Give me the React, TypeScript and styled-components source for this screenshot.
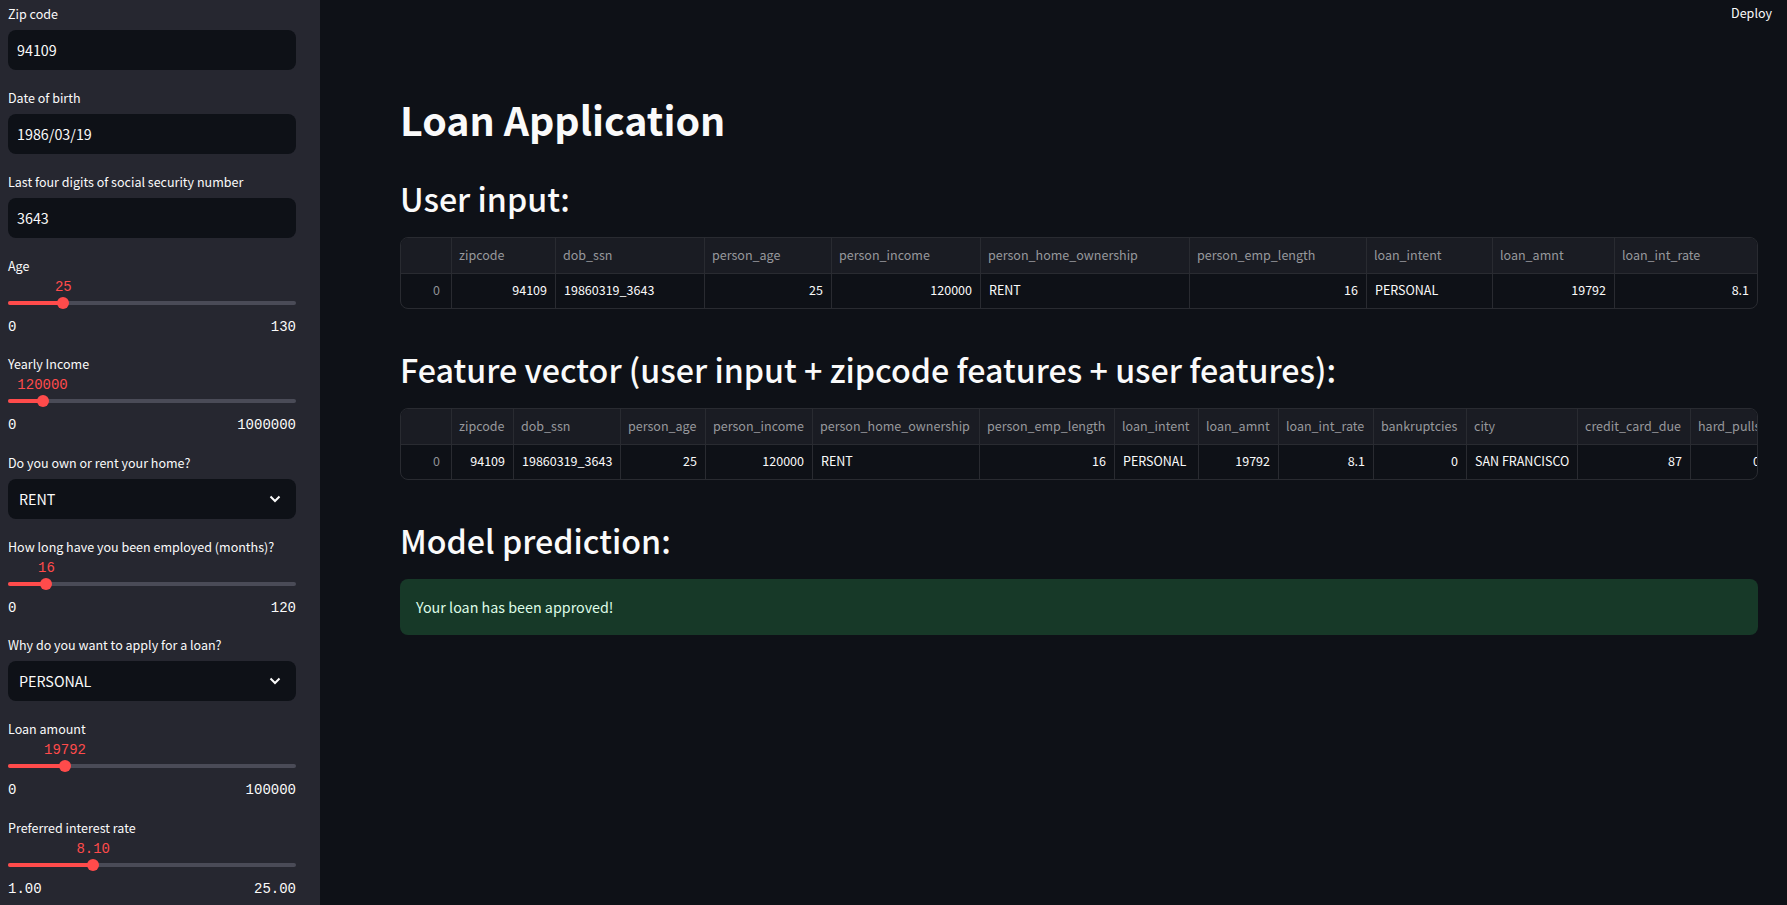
import React, { useId, useState } from "react";
import styled, { createGlobalStyle } from "styled-components";

const colors = {
  page: "#0e1117",
  sidebar: "#262730",
  text: "#fafafa",
  accent: "#ff4b4b",
  rail: "#4a4b57",
  line: "#292b31",
  tableHead: "#1a1c23",
  muted: "#97989c",
  faint: "#909296",
  successBg: "#173928",
  successText: "#dffde9",
};

const GlobalStyle = createGlobalStyle`
  *, *::before, *::after { box-sizing: border-box; }
  body {
    margin: 0;
    background: ${colors.page};
    color: ${colors.text};
    font-family: "Source Sans Pro", "Noto Sans CJK SC", "Noto Sans", sans-serif;
    font-size: 16px;
    font-size-adjust: 0.486;
    line-height: 1.6;
  }
  button, input, select { font: inherit; font-size-adjust: inherit; color: inherit; }
`;

const Shell = styled.div`
  display: flex;
  min-height: 100vh;
`;

const Sidebar = styled.aside`
  flex: 0 0 320px;
  display: flex;
  flex-direction: column;
  gap: 16px;
  padding: 2px 24px 0 8px;
  background: ${colors.sidebar};
`;

const Field = styled.div`
  display: flex;
  flex-direction: column;
`;

const Label = styled.label`
  height: 24px;
  font-size: 14px;
  line-height: 24px;
`;

const TextInput = styled.input`
  width: 100%;
  height: 40px;
  margin-top: 4px;
  padding: 0 8px 2px;
  border: 1px solid transparent;
  border-radius: 8px;
  outline: none;
  background: ${colors.page};
  &:focus { border-color: ${colors.accent}; }
`;

const SelectWrap = styled.div`
  position: relative;
  margin-top: 4px;
  svg {
    position: absolute;
    top: 8px;
    right: 9px;
    pointer-events: none;
  }
`;

const Select = styled.select`
  appearance: none;
  display: block;
  width: 100%;
  height: 40px;
  padding: 0 40px 0 10px;
  border: 1px solid transparent;
  border-radius: 8px;
  outline: none;
  background: ${colors.page};
  &:focus { border-color: ${colors.accent}; }
`;

const ValueRow = styled.div`
  position: relative;
  height: 18px;
`;

const Value = styled.output`
  position: absolute;
  top: 0;
  transform: translateX(-50%);
  color: ${colors.accent};
  font-family: "Liberation Mono", monospace;
  font-size: 14px;
  font-size-adjust: none;
  line-height: 18px;
`;

const Rail = styled.div`
  display: grid;
  align-items: center;
  height: 14px;
  > * { grid-area: 1 / 1; }
`;

const Track = styled.div`
  height: 4px;
  border-radius: 4px;
  background: ${colors.rail};
  overflow: hidden;
`;

const TrackFill = styled.div`
  height: 100%;
  background: ${colors.accent};
`;

const Range = styled.input`
  appearance: none;
  height: 12px;
  margin: 0 -6px;
  background: transparent;
  outline: none;
  cursor: pointer;
  &::-webkit-slider-thumb {
    appearance: none;
    width: 12px;
    height: 12px;
    border-radius: 50%;
    background: ${colors.accent};
  }
`;

const Limits = styled.div`
  display: flex;
  justify-content: space-between;
  margin: 6px 0 -2px;
  font-family: "Liberation Mono", monospace;
  font-size: 14px;
  font-size-adjust: none;
`;

const Main = styled.main`
  flex: 1;
  min-width: 0;
  padding: 0 29px 80px 80px;
`;

const Toolbar = styled.header`
  display: flex;
  justify-content: flex-end;
  margin-right: -14px;
`;

const DeployButton = styled.button`
  height: 26px;
  padding: 0;
  border: 0;
  background: none;
  font-size: 14px;
  line-height: 26px;
  cursor: pointer;
`;

const Title = styled.h1`
  margin: 66px 0 0;
  font-size: 44px;
  font-weight: 700;
  line-height: 54px;
`;

const Section = styled.section`
  margin-top: 32px;
  & + & { margin-top: 40px; }
`;

const Heading = styled.h2`
  margin: 0 0 18px;
  font-size: 36px;
  font-weight: 500;
  line-height: 41px;
`;

const TableFrame = styled.div`
  border: 1px solid ${colors.line};
  border-radius: 8px;
  overflow-x: auto;
  scrollbar-width: none;
`;

const Table = styled.table<{ $width?: number }>`
  width: ${(p) => (p.$width ? `${p.$width}px` : "100%")};
  table-layout: fixed;
  border-collapse: separate;
  border-spacing: 0;
  font-size: 14px;
`;

const Cell = styled.td<{ $numeric?: boolean }>`
  height: 34px;
  padding: 0 8px 2px;
  border-right: 1px solid ${colors.line};
  line-height: 20px;
  text-align: ${(p) => (p.$numeric ? "right" : "left")};
  white-space: nowrap;
  &:last-child { border-right: 0; }
`;

const IndexCell = styled(Cell)`
  padding-right: 11px;
  color: ${colors.faint};
`;

const HeadCell = styled(Cell)`
  height: 36px;
  padding: 0 7px 2px;
  border-bottom: 1px solid ${colors.line};
  background: ${colors.tableHead};
  color: ${colors.muted};
  font-weight: 400;
`;

const Success = styled.div`
  padding: 16px;
  border-radius: 8px;
  background: ${colors.successBg};
  color: ${colors.successText};
  line-height: 24px;
`;

type Column = { name: string; value: string; width: number; text?: boolean };

const userInput: Column[] = [
  { name: "zipcode", value: "94109", width: 104 },
  { name: "dob_ssn", value: "19860319_3643", width: 149, text: true },
  { name: "person_age", value: "25", width: 127 },
  { name: "person_income", value: "120000", width: 149 },
  { name: "person_home_ownership", value: "RENT", width: 209, text: true },
  { name: "person_emp_length", value: "16", width: 177 },
  { name: "loan_intent", value: "PERSONAL", width: 126, text: true },
  { name: "loan_amnt", value: "19792", width: 122 },
  { name: "loan_int_rate", value: "8.1", width: 142 },
];

const featureVector: Column[] = [
  { name: "zipcode", value: "94109", width: 62 },
  { name: "dob_ssn", value: "19860319_3643", width: 107, text: true },
  { name: "person_age", value: "25", width: 85 },
  { name: "person_income", value: "120000", width: 107 },
  { name: "person_home_ownership", value: "RENT", width: 167, text: true },
  { name: "person_emp_length", value: "16", width: 135 },
  { name: "loan_intent", value: "PERSONAL", width: 84, text: true },
  { name: "loan_amnt", value: "19792", width: 80 },
  { name: "loan_int_rate", value: "8.1", width: 95 },
  { name: "bankruptcies", value: "0", width: 93 },
  { name: "city", value: "SAN FRANCISCO", width: 111, text: true },
  { name: "credit_card_due", value: "87", width: 113 },
  { name: "hard_pulls", value: "0", width: 77 },
];

const INDEX_WIDTH = 51;

function DataTable({ columns, scroll }: { columns: Column[]; scroll?: boolean }) {
  const total = columns.reduce((sum, c) => sum + c.width, INDEX_WIDTH);
  return (
    <TableFrame>
      <Table $width={scroll ? total : undefined}>
        <colgroup>
          <col width={INDEX_WIDTH} />
          {columns.map((c) => (
            <col key={c.name} width={c.width} />
          ))}
        </colgroup>
        <thead>
          <tr>
            <HeadCell as="th" />
            {columns.map((c) => (
              <HeadCell as="th" scope="col" key={c.name}>
                {c.name}
              </HeadCell>
            ))}
          </tr>
        </thead>
        <tbody>
          <tr>
            <IndexCell $numeric>0</IndexCell>
            {columns.map((c) => (
              <Cell key={c.name} $numeric={!c.text}>
                {c.value}
              </Cell>
            ))}
          </tr>
        </tbody>
      </Table>
    </TableFrame>
  );
}

function TextField({ label, initial }: { label: string; initial: string }) {
  const id = useId();
  return (
    <Field>
      <Label htmlFor={id}>{label}</Label>
      <TextInput id={id} type="text" defaultValue={initial} />
    </Field>
  );
}

function SelectField({ label, options, initial }: { label: string; options: string[]; initial: string }) {
  const id = useId();
  return (
    <Field>
      <Label htmlFor={id}>{label}</Label>
      <SelectWrap>
        <Select id={id} defaultValue={initial}>
          {options.map((o) => (
            <option key={o}>{o}</option>
          ))}
        </Select>
        <svg width="24" height="24" viewBox="0 0 24 24" fill="none" aria-hidden="true">
          <path d="M7.5 9.5 L12 14 L16.5 9.5" stroke={colors.text} strokeWidth="2" />
        </svg>
      </SelectWrap>
    </Field>
  );
}

type SliderProps = { label: string; min: number; max: number; initial: number; step?: number; decimals?: number };

function SliderField({ label, min, max, initial, step = 1, decimals = 0 }: SliderProps) {
  const id = useId();
  const [value, setValue] = useState(initial);
  const percent = `${((value - min) / (max - min)) * 100}%`;
  return (
    <Field>
      <Label htmlFor={id}>{label}</Label>
      <ValueRow>
        <Value htmlFor={id} style={{ left: percent }}>
          {value.toFixed(decimals)}
        </Value>
      </ValueRow>
      <Rail>
        <Track>
          <TrackFill style={{ width: percent }} />
        </Track>
        <Range
          id={id}
          type="range"
          min={min}
          max={max}
          step={step}
          value={value}
          onChange={(e) => setValue(Number(e.target.value))}
        />
      </Rail>
      <Limits>
        <span>{min.toFixed(decimals)}</span>
        <span>{max.toFixed(decimals)}</span>
      </Limits>
    </Field>
  );
}

export default function App() {
  return (
    <>
      <GlobalStyle />
      <Shell>
        <Sidebar>
          <TextField label="Zip code" initial="94109" />
          <TextField label="Date of birth" initial="1986/03/19" />
          <TextField label="Last four digits of social security number" initial="3643" />
          <SliderField label="Age" min={0} max={130} initial={25} />
          <SliderField label="Yearly Income" min={0} max={1000000} initial={120000} />
          <SelectField label="Do you own or rent your home?" options={["RENT", "OWN", "MORTGAGE", "OTHER"]} initial="RENT" />
          <SliderField label="How long have you been employed (months)?" min={0} max={120} initial={16} />
          <SelectField
            label="Why do you want to apply for a loan?"
            options={["PERSONAL", "EDUCATION", "MEDICAL", "VENTURE"]}
            initial="PERSONAL"
          />
          <SliderField label="Loan amount" min={0} max={100000} initial={19792} />
          <SliderField label="Preferred interest rate" min={1} max={25} initial={8.1} step={0.1} decimals={2} />
        </Sidebar>
        <Main>
          <Toolbar>
            <DeployButton type="button">Deploy</DeployButton>
          </Toolbar>
          <Title>Loan Application</Title>
          <Section>
            <Heading>User input:</Heading>
            <DataTable columns={userInput} />
          </Section>
          <Section>
            <Heading>Feature vector (user input + zipcode features + user features):</Heading>
            <DataTable columns={featureVector} scroll />
          </Section>
          <Section>
            <Heading>Model prediction:</Heading>
            <Success role="status">Your loan has been approved!</Success>
          </Section>
        </Main>
      </Shell>
    </>
  );
}
